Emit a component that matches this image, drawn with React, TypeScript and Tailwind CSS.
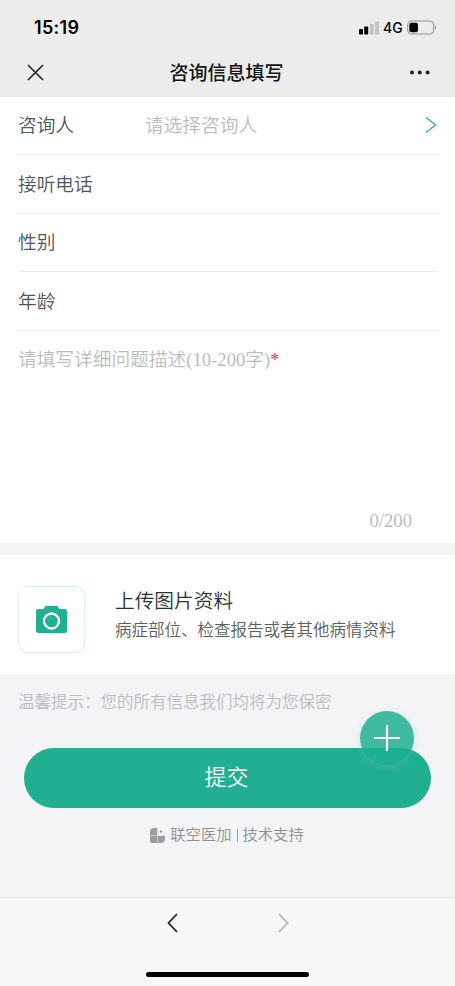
import type { ReactNode } from "react";

function StatusBar() {
  return (
    <div className="flex h-[49px] items-center justify-between pl-[34px] pr-[18px] pt-[6px] text-black">
      <span className="font-['Inter',sans-serif] text-[18px] font-semibold leading-6 tracking-[0.3px]">15:19</span>
      <div className="flex items-center">
        <svg width="21" height="14" viewBox="0 0 21 14">
          <rect x="0" y="8" width="4" height="5.5" rx="0.8" />
          <rect x="5.2" y="5.5" width="4" height="8" rx="0.8" />
          <rect x="10.8" y="3" width="4" height="10.5" rx="0.8" fill="#c2c2c2" />
          <rect x="16" y="0.5" width="4" height="13" rx="0.8" fill="#c2c2c2" />
        </svg>
        <span className="ml-[3px] w-[20px] font-['Inter',sans-serif] text-[14px] font-medium leading-4">4G</span>
        <svg className="ml-[4px]" width="30" height="15" viewBox="0 0 30 15">
          <rect x="0.7" y="1" width="26" height="13" rx="4" fill="none" stroke="#929292" strokeWidth="1.1" />
          <rect x="2.4" y="2.8" width="8.6" height="9.5" rx="2" />
          <path d="M28 5.5c1.6.6 1.6 3.6 0 4.2z" fill="#929292" />
        </svg>
      </div>
    </div>
  );
}

function TitleBar() {
  return (
    <div className="flex h-12 items-center justify-between pl-[27px] pr-[25px]">
      <svg className="-mt-px" width="17" height="17" viewBox="0 0 17 17" fill="none" stroke="#222" strokeWidth="1.6">
        <path d="M1 1l15 15M16 1L1 16" />
      </svg>
      <h1 className="mr-px pt-[2px] text-[19px] font-medium leading-7 text-[#151515]">咨询信息填写</h1>
      <svg width="20" height="6" viewBox="0 0 20 6" fill="#222">
        <circle cx="2" cy="2.5" r="2" />
        <circle cx="9.8" cy="2.5" r="2" />
        <circle cx="17.6" cy="2.5" r="2" />
      </svg>
    </div>
  );
}

function Field({ label, children }: { label: string; children?: ReactNode }) {
  return (
    <div className="flex h-[58.7px] items-center border-b border-[#ececec] text-[18.7px] text-[#4c5858]">
      <span className="w-[127px] pt-[2px]">{label}</span>
      {children}
    </div>
  );
}

export default function App() {
  return (
    <div className="flex h-[986px] w-[455px] flex-col overflow-hidden bg-[#f4f4f6] font-['Liberation_Serif','Noto_Sans_CJK_SC',sans-serif] font-[350]">
      <header className="h-[97px] shrink-0 bg-[#ececec]">
        <StatusBar />
        <TitleBar />
      </header>

      <section className="h-[446px] shrink-0 bg-white px-[18px]">
        <div className="-mt-[0.8px]">
          <Field label="咨询人">
            <span className="pt-[2px] text-[#b9bdbd]">请选择咨询人</span>
            <svg className="-mt-px ml-auto" width="12" height="18" viewBox="0 0 12 18" fill="none" stroke="#35b597" strokeWidth="1.5">
              <path d="M1 1.5L10.5 9 1 16.5" />
            </svg>
          </Field>
          <Field label="接听电话" />
          <Field label="性别" />
          <Field label="年龄" />
        </div>
        <div className="flex h-[212px] flex-col justify-between pb-[8px] pt-[15px] text-[18.7px] leading-7 text-[#b9bdbd]">
          <p>
            请填写详细问题描述(10-200字)<span className="text-[#f73340]">*</span>
          </p>
          <p className="pr-[25px] text-right">0/200</p>
        </div>
      </section>

      <section className="mt-3 flex h-[119px] shrink-0 items-center bg-white pl-[18px] pt-[9px]">
        <button className="flex h-[67px] w-[67px] items-center justify-center rounded-[10px] border border-[#d9f1eb]">
          <svg width="31" height="27" viewBox="0 0 31 27">
            <path d="M10 0h11c1.2 0 1.7 3 3 3h4.5Q31 3 31 5.5v19Q31 27 28.5 27h-26Q0 27 0 24.5v-19Q0 3 2.5 3H7c1.3 0 1.8-3 3-3z" fill="#20af91" />
            <circle cx="15.5" cy="15" r="7.5" fill="none" stroke="white" strokeWidth="2.3" />
          </svg>
        </button>
        <div className="-mt-[7px] ml-[30px]">
          <h2 className="text-[19.7px] leading-[31px] text-[#273333]">上传图片资料</h2>
          <p className="text-[16.5px] leading-7 text-[#566060]">病症部位、检查报告或者其他病情资料</p>
        </div>
      </section>

      <main className="flex grow flex-col">
        <p className="h-[74px] pl-[18px] pt-[16px] text-[16.5px] leading-[26px] text-[#b9bcbe]">温馨提示：您的所有信息我们均将为您保密</p>
        <div className="relative mx-6">
          <button className="h-[60px] w-full rounded-full bg-[#20af91] pb-px pr-[2px] text-[22px] text-white">提交</button>
          <button className="absolute right-[17px] top-[-37px] flex size-[54px] items-center justify-center rounded-full bg-[#20af91]/85 shadow-[0_2px_8px_rgba(120,200,180,0.3)]">
            <svg width="26" height="26" viewBox="0 0 26 26" stroke="white" strokeWidth="2.2" strokeLinecap="round">
              <path d="M13 1v24M1 13h24" />
            </svg>
          </button>
        </div>
        <div className="mt-[15px] flex items-center justify-center pr-px text-[15.3px] leading-6 text-[#8f9193]">
          <svg className="mr-[5px]" width="15" height="15" viewBox="0 0 15 15" fill="#9b9d9f">
            <path d="M0 7.3V4Q0 0 4 0h3.3v7.3zM0 7.7h7.3V15H2Q0 15 0 13zM7.8 7.7H15V11q0 4-4 4H7.800z" />
            <circle cx="11" cy="3.5" r="1.3" />
          </svg>
          <span>联空医加</span>
          <span className="mx-[5px] h-[13px] w-px bg-[#999b9d]" />
          <span>技术支持</span>
        </div>
      </main>

      <footer className="flex h-[89px] shrink-0 flex-col items-center justify-between border-t border-[#e6e6e8] bg-[#f7f7f7] pb-[9px] pt-[15px]">
        <nav className="flex w-[122px] justify-between">
          <svg width="11" height="20" viewBox="0 0 11 20" fill="none" stroke="#222" strokeWidth="1.8">
            <path d="M10 1L1.5 10 10 19" />
          </svg>
          <svg width="11" height="20" viewBox="0 0 11 20" fill="none" stroke="#b4b4b4" strokeWidth="1.8">
            <path d="M1 1L9.5 10 1 19" />
          </svg>
        </nav>
        <div className="h-[5px] w-[163px] rounded-full bg-black" />
      </footer>
    </div>
  );
}
